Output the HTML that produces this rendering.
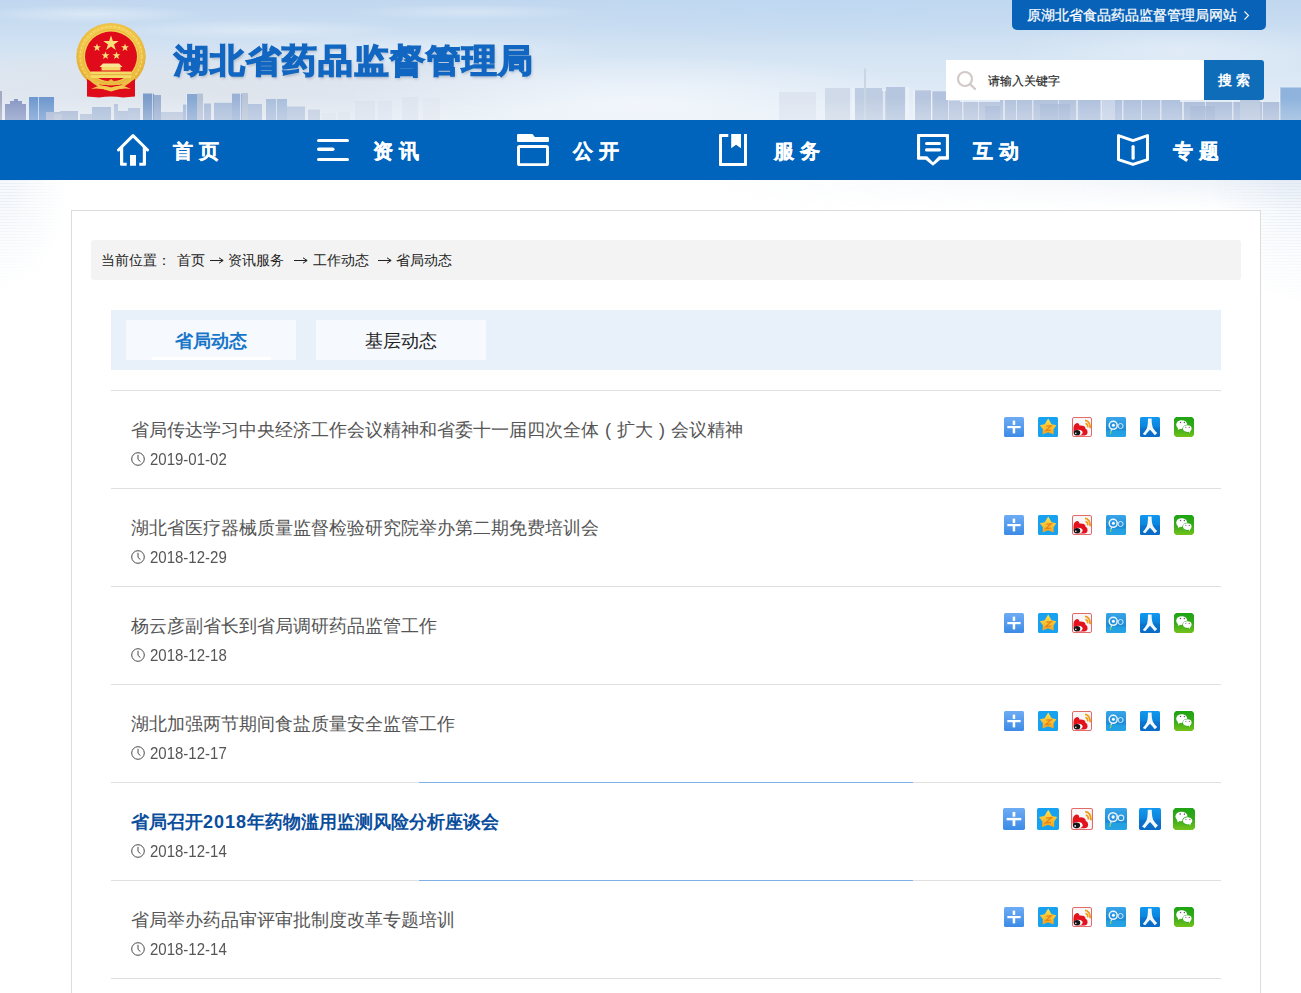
<!DOCTYPE html>
<html><head><meta charset="utf-8">
<style>
*{margin:0;padding:0;box-sizing:border-box}
html,body{width:1301px;height:993px;overflow:hidden;background:#fff;font-family:"Liberation Sans",sans-serif}
.abs{position:absolute}
#head{position:absolute;left:0;top:0;width:1301px;height:120px;overflow:hidden;
 background:linear-gradient(180deg,#c9dcef 0%,#d6e5f3 40%,#dfe9f4 70%,#dde6ef 100%)}
#nav{position:absolute;left:0;top:120px;width:1301px;height:60px;background:#0064bd}
.ni{position:absolute;top:0;height:60px;color:#fff}
.ni .t{position:absolute;top:19px;font-size:20px;font-weight:bold;letter-spacing:6px;line-height:24px;white-space:nowrap;-webkit-text-stroke:0.3px #fff}
.ni svg{position:absolute;top:14px}
#box{position:absolute;left:71px;top:210px;width:1190px;height:800px;border:1px solid #dcdcdc;background:#fff}
#crumb{position:absolute;left:91px;top:240px;width:1150px;height:40px;background:#f3f3f3;border-radius:3px;font-size:14px;color:#222;line-height:40px;white-space:nowrap}
#crumb span{position:absolute;top:0}
#tabs{position:absolute;left:111px;top:310px;width:1110px;height:60px;background:#e8f0fa}
.tab{position:absolute;top:10px;width:170px;height:40px;background:#f6f9fe;font-size:18px;line-height:43px;text-align:center;color:#222}
.tab.on{color:#1876c8;font-weight:bold}
.tab.on:after{content:'';position:absolute;left:26px;top:37px;width:119px;height:3px;background:#fff}
.line{position:absolute;left:111px;width:1110px;height:1px;background:#e0e0e0}
.item{position:absolute;left:131px;width:900px}
.item .tt{position:absolute;left:0;top:1px;font-size:18px;color:#555;white-space:nowrap;line-height:24px}
.item .dt{position:absolute;left:19px;top:34px;font-size:15px;transform:scaleY(1.06);transform-origin:0 100%;color:#555;line-height:18px;white-space:nowrap}
.item .ck{position:absolute;left:0;top:34.5px}
.pr{display:inline-block;width:18px;text-align:center}
.tt.hov{color:#0b4e9c;font-weight:bold}
.share{position:absolute;left:1004px;width:200px;height:20px}
.share i{position:absolute;top:0;width:20px;height:20px;border-radius:2px}
</style></head><body>
<div id="head">
<svg width="1301" height="120" style="position:absolute;left:0;top:0">
 <defs>
  <radialGradient id="cl1" cx="0.5" cy="0.5" r="0.5"><stop offset="0" stop-color="#f3f7fc" stop-opacity="0.95"/><stop offset="1" stop-color="#f3f7fc" stop-opacity="0"/></radialGradient>
  <radialGradient id="cl2" cx="0.5" cy="0.5" r="0.5"><stop offset="0" stop-color="#bfd9f3" stop-opacity="0.9"/><stop offset="1" stop-color="#bfd9f3" stop-opacity="0"/></radialGradient>
  <linearGradient id="bgv" x1="0" y1="0" x2="0" y2="1"><stop offset="0" stop-color="#c0d7ef"/><stop offset="0.5" stop-color="#d6e5f4"/><stop offset="1" stop-color="#e6eef7"/></linearGradient>
  <radialGradient id="gry" cx="0.5" cy="0.5" r="0.5"><stop offset="0" stop-color="#dfe3ea" stop-opacity="0.85"/><stop offset="0.6" stop-color="#dfe3ea" stop-opacity="0.5"/><stop offset="1" stop-color="#dfe3ea" stop-opacity="0"/></radialGradient>
 </defs>
 <rect width="1301" height="120" fill="url(#bgv)"/>
 <ellipse cx="200" cy="88" rx="420" ry="45" fill="url(#gry)"/>
 <ellipse cx="820" cy="8" rx="320" ry="40" fill="url(#cl2)" opacity="0.7"/>
 <ellipse cx="90" cy="14" rx="110" ry="9" fill="url(#cl1)" opacity="0.5"/>
 <ellipse cx="260" cy="30" rx="150" ry="10" fill="url(#cl1)" opacity="0.45"/>
 <ellipse cx="470" cy="12" rx="120" ry="8" fill="url(#cl1)" opacity="0.4"/>
 <ellipse cx="420" cy="50" rx="200" ry="18" fill="url(#cl1)" opacity="0.45"/>
 <ellipse cx="640" cy="100" rx="300" ry="45" fill="url(#cl1)" opacity="0.9"/>
 <ellipse cx="1180" cy="50" rx="170" ry="28" fill="url(#cl1)" opacity="0.45"/>
 <g>
  <rect x="0" y="91" width="2" height="29" fill="#a6a9c0"/>
  <rect x="5" y="104" width="21" height="16" fill="#8797c3"/>
  <rect x="10" y="101" width="12" height="19" fill="#8797c3"/>
  <rect x="14" y="99" width="4" height="21" fill="#8797c3"/>
  <rect x="29" y="97" width="25" height="23" fill="#6e98cf"/>
  <rect x="46" y="112" width="14" height="8" fill="#a9b8d4"/>
  <rect x="60" y="111" width="18" height="9" fill="#aab9d5"/>
  <rect x="54" y="114" width="8" height="6" fill="#b6c2d8"/>
  <rect x="80" y="114" width="12" height="6" fill="#b3c1da"/>
  <rect x="92" y="107" width="19" height="13" fill="#a8bcd8"/>
  <rect x="114" y="104" width="4" height="16" fill="#b3c3dc"/>
  <rect x="118" y="111" width="10" height="9" fill="#b0c0da"/>
  <rect x="128" y="108" width="12" height="12" fill="#b2c2dc"/>
  <rect x="143" y="93.5" width="11" height="26.5" fill="#7c9cc9"/>
  <rect x="154" y="95" width="7" height="25" fill="#9aaed0"/>
  <rect x="161" y="112" width="22" height="8" fill="#b9c6dc"/>
  <rect x="183" y="104.5" width="14" height="15.5" fill="#a5b8d6"/>
  <rect x="187" y="94" width="10" height="26" fill="#86a7d3"/>
  <rect x="197" y="93.5" width="6" height="26.5" fill="#b6c2d6"/>
  <rect x="204" y="103.5" width="7" height="16.5" fill="#a9bbd8"/>
  <rect x="214" y="102.8" width="19" height="17.200000000000003" fill="#a8bcd9"/>
  <rect x="232" y="93.6" width="10" height="26.400000000000006" fill="#9bb2d6"/>
  <rect x="242" y="93" width="6" height="27" fill="#b8c4d8"/>
  <rect x="248" y="104" width="14" height="16" fill="#aec0dc"/>
  <rect x="266" y="99" width="21" height="21" fill="#a9bddb"/>
  <rect x="287" y="106.5" width="18" height="13.5" fill="#b6c6de"/>
  <rect x="308" y="109.6" width="12" height="10.400000000000006" fill="#c0cde0"/>
  <rect x="322" y="113" width="14" height="7" fill="#dde4ee"/>
  <rect x="338" y="112" width="12" height="8" fill="#dde4ee"/>
  <rect x="355" y="101" width="20" height="19" fill="#dae2ed"/>
  <rect x="378" y="101" width="14" height="19" fill="#dde4ef"/>
  <rect x="402" y="97" width="16" height="23" fill="#dce4ef"/>
  <rect x="423" y="98" width="17" height="22" fill="#e2e8f1"/>
  <rect x="779" y="92" width="37" height="28" fill="#dde5f0"/>
  <rect x="825" y="88" width="25" height="32" fill="#d0dae8"/>
  <rect x="855" y="88" width="27" height="32" fill="#bfcde2"/>
  <rect x="864" y="68.5" width="2" height="51.5" fill="#c9d4e4"/>
  <rect x="882" y="91" width="4" height="29" fill="#c3d0e3"/>
  <rect x="886" y="87" width="19" height="33" fill="#b5c6de"/>
  <rect x="915" y="90.4" width="16" height="29.599999999999994" fill="#b7c6de"/>
  <rect x="932" y="91.3" width="16" height="28.700000000000003" fill="#b3c3dd"/>
  <rect x="948" y="100.6" width="12" height="19.400000000000006" fill="#b8c6de"/>
  <rect x="960" y="102" width="40" height="18" fill="#b6c4dc"/>
  <rect x="1000" y="99" width="80" height="21" fill="#b1c1dc"/>
  <rect x="1080" y="99" width="100" height="21" fill="#adbfdc"/>
  <rect x="1180" y="102" width="100" height="18" fill="#abbcd9"/>
  <rect x="1100" y="97" width="15" height="23" fill="#c5d2e6"/>
  <rect x="1240" y="100" width="20" height="20" fill="#b9c8de"/>
  <rect x="1280" y="87.5" width="21" height="32.5" fill="#8fb3dc"/>
  <rect x="852" y="88" width="2" height="32" fill="#eef3fa" opacity="0.65"/>
  <rect x="883" y="90" width="2" height="30" fill="#eef3fa" opacity="0.65"/>
  <rect x="906" y="87" width="3" height="33" fill="#eef3fa" opacity="0.65"/>
  <rect x="913" y="90" width="2" height="30" fill="#eef3fa" opacity="0.65"/>
  <rect x="931" y="91" width="1.5" height="29" fill="#eef3fa" opacity="0.65"/>
  <rect x="948" y="100" width="1" height="20" fill="#eef3fa" opacity="0.65"/>
  <rect x="962" y="101" width="1.5" height="19" fill="#eef3fa" opacity="0.65"/>
  <rect x="978" y="101" width="1" height="19" fill="#eef3fa" opacity="0.65"/>
  <rect x="1003" y="100" width="2" height="20" fill="#eef3fa" opacity="0.65"/>
  <rect x="1016" y="100" width="1" height="20" fill="#eef3fa" opacity="0.65"/>
  <rect x="1032" y="100" width="1.5" height="20" fill="#eef3fa" opacity="0.65"/>
  <rect x="1058" y="100" width="1" height="20" fill="#eef3fa" opacity="0.65"/>
  <rect x="1076" y="100" width="2" height="20" fill="#eef3fa" opacity="0.65"/>
  <rect x="1101" y="100" width="1" height="20" fill="#eef3fa" opacity="0.65"/>
  <rect x="1122" y="100" width="1.5" height="20" fill="#eef3fa" opacity="0.65"/>
  <rect x="1141" y="100" width="1" height="20" fill="#eef3fa" opacity="0.65"/>
  <rect x="1160" y="100" width="1.5" height="20" fill="#eef3fa" opacity="0.65"/>
  <rect x="1182" y="100" width="2" height="20" fill="#eef3fa" opacity="0.65"/>
  <rect x="1205" y="100" width="1" height="20" fill="#eef3fa" opacity="0.65"/>
  <rect x="1232" y="100" width="1.5" height="20" fill="#eef3fa" opacity="0.65"/>
  <rect x="1262" y="100" width="1" height="20" fill="#eef3fa" opacity="0.65"/>
  <rect x="1279" y="88" width="1.5" height="32" fill="#eef3fa" opacity="0.65"/>
  <rect x="38" y="97" width="1" height="23" fill="#eef3fa" opacity="0.65"/>
  <rect x="152" y="93" width="1" height="27" fill="#eef3fa" opacity="0.65"/>
  <rect x="186" y="94" width="1" height="26" fill="#eef3fa" opacity="0.65"/>
  <rect x="240" y="93" width="1" height="27" fill="#eef3fa" opacity="0.65"/>
  <rect x="276" y="99" width="1" height="21" fill="#eef3fa" opacity="0.65"/>
  <rect x="1040" y="104" width="30" height="16" fill="#9fb3d3" opacity="0.7"/>
  <rect x="1190" y="106" width="25" height="14" fill="#9cb1d2" opacity="0.7"/>
  <rect x="985" y="106" width="15" height="14" fill="#a3b6d5" opacity="0.7"/>
 </g>
 <defs><linearGradient id="haze" x1="0" y1="0" x2="0" y2="1"><stop offset="0" stop-color="#fff" stop-opacity="0"/><stop offset="1" stop-color="#f4f7fb" stop-opacity="0.3"/></linearGradient></defs>
 <rect x="0" y="98" width="1301" height="22" fill="url(#haze)"/>
</svg>
<svg width="72" height="78" viewBox="0 0 72 78" style="position:absolute;left:75px;top:21px">
 <defs><radialGradient id="gold" cx="0.5" cy="0.45" r="0.55"><stop offset="0.7" stop-color="#f3cd52"/><stop offset="0.88" stop-color="#eab83c"/><stop offset="1" stop-color="#dda634"/></radialGradient></defs>
 <ellipse cx="36" cy="35.5" rx="34.7" ry="33.5" fill="url(#gold)"/>
 <ellipse cx="36" cy="35.5" rx="31" ry="30" fill="none" stroke="#f8dd78" stroke-width="1.2" stroke-dasharray="2.5 1.8" opacity="0.9"/>
 <ellipse cx="36" cy="35.5" rx="28" ry="27" fill="none" stroke="#d9a232" stroke-width="0.8" opacity="0.6"/>
 <ellipse cx="36" cy="35.5" rx="26" ry="25" fill="#df0b1b"/>
 <g fill="#fbe07a">
  <polygon points="36,14.5 37.9,20 43.7,20 39,23.4 40.8,29 36,25.6 31.2,29 33,23.4 28.3,20 34.1,20"/>
  <polygon points="22,22.5 23,25.2 25.9,25.3 23.6,27.1 24.4,30 22,28.3 19.6,30 20.4,27.1 18.1,25.3 21,25.2"/>
  <polygon points="50,22.5 51,25.2 53.9,25.3 51.6,27.1 52.4,30 50,28.3 47.6,30 48.4,27.1 46.1,25.3 49,25.2"/>
  <polygon points="30.5,30.5 31.5,33.2 34.4,33.3 32.1,35.1 32.9,38 30.5,36.3 28.1,38 28.9,35.1 26.6,33.3 29.5,33.2"/>
  <polygon points="41.5,30.5 42.5,33.2 45.4,33.3 43.1,35.1 43.9,38 41.5,36.3 39.1,38 39.9,35.1 37.6,33.3 40.5,33.2"/>
 </g>
 <polygon points="28,42.5 44,42.5 47.5,46 24.5,46" fill="#f9e596"/>
 <rect x="26.5" y="46" width="19" height="3.5" fill="#f5d865"/>
 <rect x="15.5" y="50.5" width="41" height="6.5" rx="1" fill="#f6da66"/>
 <rect x="15.5" y="53.2" width="41" height="0.9" fill="#e0a83a"/>
 <path d="M12,58 L12,75.5 L24,76.5 Q36,74.5 48,76.5 L60,75.5 L60,58 Q52,63 44,64 L28,64 Q20,63 12,58 Z" fill="#df0b1b"/><path d="M13,56 Q36,80 59,56" fill="none" stroke="#eebf45" stroke-width="2.6"/>
 <path d="M16,68 Q26,62.5 36,66.5 Q46,62.5 56,68 Q46,66.5 36,70.5 Q26,66.5 16,68 Z" fill="#f3c94f"/>
 <path d="M29,63 L30.5,59.8 L33.3,60 L36,58 L38.7,60 L41.5,59.8 L43,63 Q36,66 29,63 Z" fill="#eab93f"/>
</svg>
<div style="position:absolute;left:174px;top:35px;font-size:35px;font-weight:700;color:#1066c0;letter-spacing:1px;line-height:50px;white-space:nowrap;-webkit-text-stroke:1.5px #1066c0;text-shadow:1px 2px 3px rgba(70,90,120,0.35);transform:scaleY(0.95);transform-origin:0 80%">湖北省药品监督管理局</div>
<div style="position:absolute;left:1012px;top:0;width:254px;height:30px;background:#0862b8;border-radius:0 0 5px 5px;color:#fff;font-size:14px;line-height:31px;padding-left:15px;white-space:nowrap;-webkit-text-stroke:0.25px #fff">原湖北省食品药品监督管理局网站<svg width="8" height="12" style="position:absolute;left:231px;top:10px"><path d="M1.5,1.5 L5.5,5.5 L1.5,9.5" fill="none" stroke="#fff" stroke-width="1.1"/></svg></div>
<div style="position:absolute;left:946px;top:60px;width:258px;height:40px;background:#fff">
 <svg width="22" height="22" style="position:absolute;left:10px;top:10px"><circle cx="9" cy="9" r="7" fill="none" stroke="#d3c9c9" stroke-width="2.2"/><line x1="14" y1="14" x2="19" y2="19" stroke="#d3c9c9" stroke-width="2.4" stroke-linecap="round"/></svg>
 <div style="position:absolute;left:42px;top:1px;font-size:12px;color:#222;line-height:40px;white-space:nowrap;-webkit-text-stroke:0.15px #222">请输入关键字</div>
</div>
<div style="position:absolute;left:1204px;top:60px;width:60px;height:40px;background:#0e6cb8;color:#fff;font-size:14px;font-weight:bold;line-height:40px;text-align:center;letter-spacing:4px;text-indent:4px;border-radius:0 3px 3px 0">搜索</div>
</div>
<div id="nav">
 <div class="ni" style="left:117px"><svg width="32" height="32" viewBox="0 0 32 32"><path d="M1.5,16 L16,1.6 L30.5,16" fill="none" stroke="#fff" stroke-width="3" stroke-linecap="round" stroke-linejoin="round"/><path d="M3,14 L6.2,11 V28.7 H9.7 V31.8 H4.2 Q3,31.8 3,30.6 Z M29,14 L25.8,11 V28.7 H22.3 V31.8 H27.8 Q29,31.8 29,30.6 Z M13,21 H19 V31.8 H13 Z" fill="#fff"/></svg><div class="t" style="left:56px">首页</div></div>
 <div class="ni" style="left:317px"><svg width="32" height="32" viewBox="0 0 32 32"><rect x="0" y="5" width="32" height="3" rx="1.5" fill="#fff"/><rect x="0" y="13.5" width="17.5" height="3.5" rx="1.7" fill="#fff"/><rect x="0" y="24" width="32" height="3" rx="1.5" fill="#fff"/></svg><div class="t" style="left:56px">资讯</div></div>
 <div class="ni" style="left:517px"><svg width="32" height="32" viewBox="0 0 32 32"><path d="M0,1.2 Q0,0 1.2,0 H15.5 L17.8,3 H30.8 Q32,3 32,4.2 V6.8 Q32,8 30.8,8 H1.2 Q0,8 0,6.8 Z" fill="#fff"/><rect x="1.5" y="12.5" width="29" height="18.3" rx="1" fill="none" stroke="#fff" stroke-width="3"/></svg><div class="t" style="left:56px">公开</div></div>
 <div class="ni" style="left:719px"><svg width="32" height="32" viewBox="0 0 32 32"><path d="M9.3,0 H1 Q0,0 0,1 V31 Q0,32 1,32 H27 Q28,32 28,31 V0 H25 V29 H3 V3 H9.3 Z M12.2,0 H22 V14.2 L17.1,10.8 L12.2,14.2 Z" fill="#fff"/></svg><div class="t" style="left:55px">服务</div></div>
 <div class="ni" style="left:917px"><svg width="32" height="32" viewBox="0 0 32 32"><path fill-rule="evenodd" d="M1,0 H31 Q32,0 32,1 V24.7 Q32,25.7 31,25.7 H23.2 L16,31.8 L8.6,25.7 H1 Q0,25.7 0,24.7 V1 Q0,0 1,0 Z M3.1,3.1 V22.2 H10.1 L16,28.3 L21.8,22.2 H28.9 V3.1 Z" fill="#fff"/><rect x="8" y="8.1" width="16" height="3" rx="1.5" fill="#fff"/><rect x="8" y="14.3" width="16" height="3.1" rx="1.5" fill="#fff"/></svg><div class="t" style="left:56px">互动</div></div>
 <div class="ni" style="left:1117px"><svg width="32" height="32" viewBox="0 0 32 32"><path d="M1.5,1.6 L16,6.6 L30.5,1.6 V25.6 L16,30.4 L1.5,25.6 Z" fill="none" stroke="#fff" stroke-width="3" stroke-linejoin="round"/><line x1="16.1" y1="12.5" x2="16.1" y2="24.2" stroke="#fff" stroke-width="3.2" stroke-linecap="round"/></svg><div class="t" style="left:56px">专题</div></div>
</div>
<svg width="0" height="0" style="position:absolute">
<defs>
 <linearGradient id="gq" x1="0" y1="0" x2="0" y2="1"><stop offset="0" stop-color="#ffe34a"/><stop offset="1" stop-color="#f3a41a"/></linearGradient>
 <linearGradient id="g1" x1="0" y1="0" x2="0" y2="1"><stop offset="0" stop-color="#6eabf4"/><stop offset="1" stop-color="#3c8be6"/></linearGradient>
 <linearGradient id="g6" x1="0" y1="0" x2="0" y2="1"><stop offset="0" stop-color="#1fa314"/><stop offset="0.5" stop-color="#34ab17"/><stop offset="1" stop-color="#74c21c"/></linearGradient>
 <linearGradient id="g5" x1="0" y1="0" x2="0" y2="1"><stop offset="0" stop-color="#1198f0"/><stop offset="0.5" stop-color="#0b84dc"/><stop offset="0.55" stop-color="#0a74cf"/><stop offset="1" stop-color="#0a6bc4"/></linearGradient>
 <linearGradient id="g4" x1="0" y1="0" x2="0" y2="1"><stop offset="0" stop-color="#39a6ea"/><stop offset="0.65" stop-color="#1c8ad6"/><stop offset="0.7" stop-color="#22a0e2"/><stop offset="1" stop-color="#25a3e4"/></linearGradient>
 <symbol id="s1" viewBox="0 0 20 20"><rect x="0" y="0" width="20" height="20" rx="1.5" fill="url(#g1)"/><rect x="3.3" y="9" width="13.3" height="2.2" fill="#fff"/><rect x="8.7" y="3.6" width="2.5" height="4.3" fill="#fff"/><rect x="8.7" y="9" width="2.5" height="7.4" fill="#fff"/></symbol>
 <symbol id="s2" viewBox="0 0 20 20"><rect x="0" y="0" width="20" height="20" rx="1.5" fill="#16a2f1"/><polygon points="10.2,1.5 13.6,7.3 18.4,8.2 15.6,12.2 15.6,17.6 10.1,15.2 4.6,17.6 4.9,12.2 1.8,8.2 6.7,7.3" fill="url(#gq)"/><path d="M8.2,9.2 L13.2,8.8 L7.8,13.6 L12.8,13.2" fill="none" stroke="#e47a1c" stroke-width="1.3" opacity="0.85"/></symbol>
 <symbol id="s3" viewBox="0 0 20 20"><rect x="0.5" y="0.5" width="19" height="19" rx="1.5" fill="#f7f7f9" stroke="#e46a6a" stroke-width="1"/><path d="M1.5,13 Q1.2,7.5 4.2,6.2 Q7.2,5.3 7.5,8.6 Q9.5,8.2 11.8,9 Q13.6,9.8 13.4,11.6 Q15.8,12.8 15.6,15.5 Q15.2,18.4 12.2,18.5 L4,18.5 Q1.6,17.5 1.5,13 Z" fill="#e3131e"/><path d="M1.6,15.6 Q2.6,12.8 6.2,12.8 Q10.2,12.9 10.6,15.6 Q10.4,18 6.8,18.3 L3.4,18.3 Q1.6,17.5 1.6,15.6 Z" fill="#fff"/><ellipse cx="5" cy="15.7" rx="3.3" ry="2.6" fill="#151515"/><circle cx="3.8" cy="16.3" r="0.8" fill="#fff"/><path d="M13,3.4 Q18,3.8 18.2,11.2" fill="none" stroke="#f29c14" stroke-width="1.7"/><path d="M13.5,6.4 Q15.7,6.7 15.9,10.4" fill="none" stroke="#f29c14" stroke-width="1.6"/></symbol>
 <symbol id="s4" viewBox="0 0 20 20"><rect x="0" y="0" width="20" height="20" rx="1.5" fill="url(#g4)"/><circle cx="7.2" cy="8.3" r="4" fill="none" stroke="#eef6fc" stroke-width="1.5"/><circle cx="7.4" cy="8.2" r="1.5" fill="#fff"/><path d="M5.8,11.8 L5,14" fill="none" stroke="#dfeef9" stroke-width="1.2"/><path d="M5,14 L4.4,17.2" fill="none" stroke="#8fd05a" stroke-width="1.2"/><circle cx="14.6" cy="9" r="2.5" fill="none" stroke="#d5eaf8" stroke-width="1"/></symbol>
 <symbol id="s5" viewBox="0 0 20 20"><rect x="0" y="0" width="20" height="20" rx="1.5" fill="url(#g5)"/><path d="M8,1.6 H11.6 Q11.7,8.5 13,11 Q14.8,14 17.2,16 L14.8,18.3 Q12,14.8 10,12.8 Q8,14.8 5.2,18.3 L2.8,16.9 Q5.6,14 7,11 Q7.9,8.5 8,1.6 Z" fill="#f3f8fd"/></symbol>
 <symbol id="s6" viewBox="0 0 20 20"><path d="M2,0 H18 L20,2 V18 L18,20 H2 L0,18 V2 Z" fill="url(#g6)"/><ellipse cx="7.7" cy="7.7" rx="5.5" ry="4.4" fill="#fff"/><path d="M3.5,10 L4.3,13 L6.8,11.3 Z" fill="#fff"/><ellipse cx="13.3" cy="11.6" rx="4.9" ry="3.8" fill="#2aa516"/><ellipse cx="13.3" cy="11.6" rx="4.3" ry="3.3" fill="#fff"/><path d="M14.3,14 L15.5,16 L16.5,13.5 Z" fill="#fff"/><circle cx="6.5" cy="5.5" r="0.75" fill="#6b5a6b"/><circle cx="10.4" cy="5.5" r="0.75" fill="#6b5a6b"/><circle cx="11.8" cy="10.4" r="0.65" fill="#8a90b8"/><circle cx="15.3" cy="10.4" r="0.65" fill="#c05a6a"/></symbol>
 <symbol id="ck" viewBox="0 0 14 14"><circle cx="7" cy="7" r="6.3" fill="none" stroke="#4a4a4a" stroke-width="1"/><path d="M7,2.8 V7.4 L9.5,9.7" fill="none" stroke="#4a4a4a" stroke-width="1"/></symbol>
</defs></svg>
<div style="position:absolute;left:0;top:180px;width:70px;height:110px;background:repeating-linear-gradient(180deg,rgba(218,228,241,0.55) 0 1px,rgba(232,238,246,0.35) 1px 3px);-webkit-mask:radial-gradient(ellipse 70px 110px at 0 0,#000 20%,rgba(0,0,0,0.5) 55%,transparent 100%)"></div>
<div style="position:absolute;left:1211px;top:180px;width:90px;height:130px;background:repeating-linear-gradient(180deg,rgba(214,226,241,0.6) 0 1px,rgba(230,237,246,0.35) 1px 3px);-webkit-mask:radial-gradient(ellipse 90px 125px at 100% 0,#000 20%,rgba(0,0,0,0.5) 55%,transparent 100%)"></div>
<div style="position:absolute;left:700px;top:180px;width:601px;height:30px;background:linear-gradient(90deg,rgba(228,235,244,0),rgba(228,235,244,0.35) 60%,rgba(215,226,240,0.5));-webkit-mask:linear-gradient(180deg,#000,transparent)"></div>
<div id="box"></div>
<div id="crumb"><span style="left:10px">当前位置：</span><span style="left:85.5px">首页</span><svg width="16" height="8" style="position:absolute;left:118px;top:16px"><path d="M1,4.5 H14" stroke="#222" stroke-width="1"/><path d="M10,1.8 L14.2,4.5 L10,7.2" fill="none" stroke="#222" stroke-width="1"/></svg><span style="left:137px">资讯服务</span><svg width="16" height="8" style="position:absolute;left:202px;top:16px"><path d="M1,4.5 H14" stroke="#222" stroke-width="1"/><path d="M10,1.8 L14.2,4.5 L10,7.2" fill="none" stroke="#222" stroke-width="1"/></svg><span style="left:221.5px">工作动态</span><svg width="16" height="8" style="position:absolute;left:286px;top:16px"><path d="M1,4.5 H14" stroke="#222" stroke-width="1"/><path d="M10,1.8 L14.2,4.5 L10,7.2" fill="none" stroke="#222" stroke-width="1"/></svg><span style="left:305px">省局动态</span></div>
<div id="tabs">
 <div class="tab on" style="left:15px">省局动态</div>
 <div class="tab" style="left:205px">基层动态</div>
</div>
<div class="line" style="top:390px"></div>
<div class="line" style="top:488px"></div>
<div class="line" style="top:586px"></div>
<div class="line" style="top:684px"></div>
<div class="line" style="top:782px"></div>
<div class="line" style="top:880px"></div>
<div class="line" style="top:978px"></div>
<div class="item" style="top:417px"><div class="tt">省局传达学习中央经济工作会议精神和省委十一届四次全体<span class="pr">(</span>扩大<span class="pr">)</span>会议精神</div><svg class="ck" width="14" height="14"><use href="#ck"/></svg><div class="dt">2019-01-02</div></div>
<svg width="20" height="20" style="position:absolute;left:1004px;top:417px"><use href="#s1"/></svg><svg width="20" height="20" style="position:absolute;left:1038px;top:417px"><use href="#s2"/></svg><svg width="20" height="20" style="position:absolute;left:1072px;top:417px"><use href="#s3"/></svg><svg width="20" height="20" style="position:absolute;left:1106px;top:417px"><use href="#s4"/></svg><svg width="20" height="20" style="position:absolute;left:1140px;top:417px"><use href="#s5"/></svg><svg width="20" height="20" style="position:absolute;left:1174px;top:417px"><use href="#s6"/></svg>
<div class="item" style="top:515px"><div class="tt">湖北省医疗器械质量监督检验研究院举办第二期免费培训会</div><svg class="ck" width="14" height="14"><use href="#ck"/></svg><div class="dt">2018-12-29</div></div>
<svg width="20" height="20" style="position:absolute;left:1004px;top:515px"><use href="#s1"/></svg><svg width="20" height="20" style="position:absolute;left:1038px;top:515px"><use href="#s2"/></svg><svg width="20" height="20" style="position:absolute;left:1072px;top:515px"><use href="#s3"/></svg><svg width="20" height="20" style="position:absolute;left:1106px;top:515px"><use href="#s4"/></svg><svg width="20" height="20" style="position:absolute;left:1140px;top:515px"><use href="#s5"/></svg><svg width="20" height="20" style="position:absolute;left:1174px;top:515px"><use href="#s6"/></svg>
<div class="item" style="top:613px"><div class="tt">杨云彦副省长到省局调研药品监管工作</div><svg class="ck" width="14" height="14"><use href="#ck"/></svg><div class="dt">2018-12-18</div></div>
<svg width="20" height="20" style="position:absolute;left:1004px;top:613px"><use href="#s1"/></svg><svg width="20" height="20" style="position:absolute;left:1038px;top:613px"><use href="#s2"/></svg><svg width="20" height="20" style="position:absolute;left:1072px;top:613px"><use href="#s3"/></svg><svg width="20" height="20" style="position:absolute;left:1106px;top:613px"><use href="#s4"/></svg><svg width="20" height="20" style="position:absolute;left:1140px;top:613px"><use href="#s5"/></svg><svg width="20" height="20" style="position:absolute;left:1174px;top:613px"><use href="#s6"/></svg>
<div class="item" style="top:711px"><div class="tt">湖北加强两节期间食盐质量安全监管工作</div><svg class="ck" width="14" height="14"><use href="#ck"/></svg><div class="dt">2018-12-17</div></div>
<svg width="20" height="20" style="position:absolute;left:1004px;top:711px"><use href="#s1"/></svg><svg width="20" height="20" style="position:absolute;left:1038px;top:711px"><use href="#s2"/></svg><svg width="20" height="20" style="position:absolute;left:1072px;top:711px"><use href="#s3"/></svg><svg width="20" height="20" style="position:absolute;left:1106px;top:711px"><use href="#s4"/></svg><svg width="20" height="20" style="position:absolute;left:1140px;top:711px"><use href="#s5"/></svg><svg width="20" height="20" style="position:absolute;left:1174px;top:711px"><use href="#s6"/></svg>
<div class="item" style="top:809px"><div class="tt hov">省局召开<span style="letter-spacing:1px">2018</span>年药物滥用监测风险分析座谈会</div><svg class="ck" width="14" height="14"><use href="#ck"/></svg><div class="dt">2018-12-14</div></div>
<svg width="22" height="22" style="position:absolute;left:1003px;top:808px"><use href="#s1"/></svg><svg width="22" height="22" style="position:absolute;left:1037px;top:808px"><use href="#s2"/></svg><svg width="22" height="22" style="position:absolute;left:1071px;top:808px"><use href="#s3"/></svg><svg width="22" height="22" style="position:absolute;left:1105px;top:808px"><use href="#s4"/></svg><svg width="22" height="22" style="position:absolute;left:1139px;top:808px"><use href="#s5"/></svg><svg width="22" height="22" style="position:absolute;left:1173px;top:808px"><use href="#s6"/></svg>
<div class="item" style="top:907px"><div class="tt">省局举办药品审评审批制度改革专题培训</div><svg class="ck" width="14" height="14"><use href="#ck"/></svg><div class="dt">2018-12-14</div></div>
<svg width="20" height="20" style="position:absolute;left:1004px;top:907px"><use href="#s1"/></svg><svg width="20" height="20" style="position:absolute;left:1038px;top:907px"><use href="#s2"/></svg><svg width="20" height="20" style="position:absolute;left:1072px;top:907px"><use href="#s3"/></svg><svg width="20" height="20" style="position:absolute;left:1106px;top:907px"><use href="#s4"/></svg><svg width="20" height="20" style="position:absolute;left:1140px;top:907px"><use href="#s5"/></svg><svg width="20" height="20" style="position:absolute;left:1174px;top:907px"><use href="#s6"/></svg>
<div style="position:absolute;left:419px;top:782px;width:494px;height:1px;background:#7fb0e6"></div>
<div style="position:absolute;left:419px;top:880px;width:494px;height:1px;background:#7fb0e6"></div>
</body></html>
